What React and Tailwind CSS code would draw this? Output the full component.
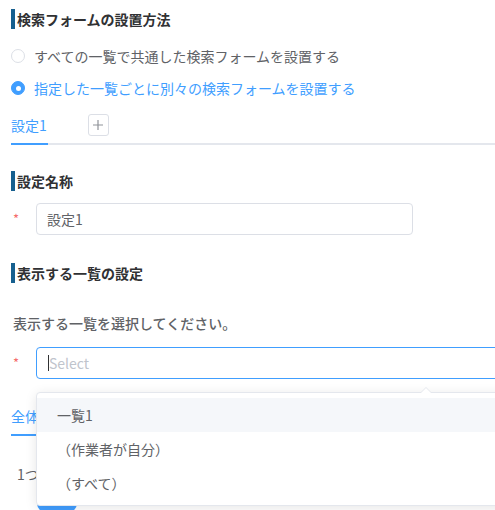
import React from "react";

function Heading({ children, className = "" }) {
  return (
    <div className={`flex items-center h-[20px] border-l-4 border-[#17608f] pl-[2px] text-[14px] font-bold text-[#303133] leading-[20px] ${className}`}>
      {children}
    </div>
  );
}

function Radio({ checked, label, className = "" }) {
  return (
    <div className={`flex items-center h-[20px] ${className}`}>
      {checked ? (
        <span className="w-[14px] h-[14px] rounded-full bg-[#409eff] border border-[#409eff] flex items-center justify-center">
          <span className="w-[5px] h-[5px] rounded-full bg-white" />
        </span>
      ) : (
        <span className="w-[14px] h-[14px] rounded-full bg-white border border-[#dcdfe6]" />
      )}
      <span className={`ml-[9px] text-[14px] leading-[20px] ${checked ? "text-[#409eff]" : "text-[#606266]"}`}>{label}</span>
    </div>
  );
}

export default function App() {
  return (
    <div className="relative w-[495px] h-[510px] overflow-hidden bg-white font-['Noto_Sans_CJK_JP','Noto_Sans',sans-serif]">
      <div className="pl-[11px] pt-[9px]">
        <Heading>検索フォームの設置方法</Heading>
        <Radio className="mt-[17px]" label="すべての一覧で共通した検索フォームを設置する" />
        <Radio className="mt-[12px]" checked label="指定した一覧ごとに別々の検索フォームを設置する" />

        <div className="mt-[7px] relative h-[40px] flex items-center">
          <div className="relative h-[40px] flex items-center text-[14px] text-[#409eff]">
            設定1
          </div>
          <div className="ml-[41px] w-[21px] h-[22px] border border-[#dcdfe6] rounded-[3px] flex items-center justify-center text-[#909399]">
            <svg width="12" height="12" viewBox="0 0 12 12">
              <path d="M6 1v10M1 6h10" stroke="#909399" strokeWidth="1.2" />
            </svg>
          </div>
          <div className="absolute left-0 right-0 bottom-0 h-[2px] bg-[#e4e7ed]" />
          <div className="absolute left-0 w-[37px] bottom-0 h-[2px] bg-[#409eff]" />
        </div>

        <Heading className="mt-[26px]">設定名称</Heading>
        <div className="mt-[12px] flex items-center">
          <span className="w-[25px] shrink-0 pl-[2px] text-[13px] text-[#f56c6c]">*</span>
          <div className="w-[377px] shrink-0 h-[32px] border border-[#dcdfe6] rounded-[4px] flex items-center pl-[10px] text-[14px] text-[#606266]">
            設定1
          </div>
        </div>

        <Heading className="mt-[28px]">表示する一覧の設定</Heading>
        <div className="mt-[30px] pl-[2px] h-[20px] leading-[20px] text-[14px] font-medium text-[#606266]">
          表示する一覧を選択してください。
        </div>
        <div className="mt-[14px] flex items-center">
          <span className="w-[25px] shrink-0 pl-[2px] text-[13px] text-[#f56c6c]">*</span>
          <div className="w-[480px] shrink-0 h-[32px] border border-[#409eff] rounded-[4px] flex items-center pl-[11px] text-[14px] text-[#c0c4cc]">
            <span className="w-[1px] h-[16px] bg-[#303133]" />
            <span>Select</span>
          </div>
        </div>

        <div className="mt-[17px] relative h-[40px] flex items-center">
          <div className="h-[40px] flex items-center text-[14px] text-[#409eff]">全体設定</div>
          <div className="absolute left-0 right-0 bottom-0 h-[2px] bg-[#e4e7ed]" />
          <div className="absolute left-0 w-[56px] bottom-0 h-[2px] bg-[#409eff]" />
        </div>
        <div className="mt-[28px] pl-[6px] h-[20px] leading-[20px] text-[14px] text-[#606266]">1つの検索フォームを設置する</div>
        <div className="mt-[9px] ml-[26px] w-[40px] h-[20px] rounded-full bg-[#409eff]" />
      </div>

      {/* dropdown */}
      <div className="absolute left-[36px] top-[392px] w-[480px] h-[114px] bg-white border border-[#e4e7ed] rounded-[4px] shadow-[0_2px_12px_rgba(0,0,0,0.1)] py-[5px]">
        <div className="absolute -top-[6px] left-[383px] w-0 h-0 border-l-[6px] border-r-[6px] border-b-[6px] border-l-transparent border-r-transparent border-b-[#e4e7ed]" />
        <div className="absolute -top-[5px] left-[384px] w-0 h-0 border-l-[5px] border-r-[5px] border-b-[5px] border-l-transparent border-r-transparent border-b-white" />
        <div className="h-[34px] flex items-center pl-[20px] bg-[#f5f7fa] text-[14px] text-[#606266]">一覧1</div>
        <div className="h-[34px] flex items-center pl-[20px] text-[14px] text-[#606266]">（作業者が自分）</div>
        <div className="h-[34px] flex items-center pl-[20px] text-[14px] text-[#606266]">（すべて）</div>
      </div>
    </div>
  );
}
